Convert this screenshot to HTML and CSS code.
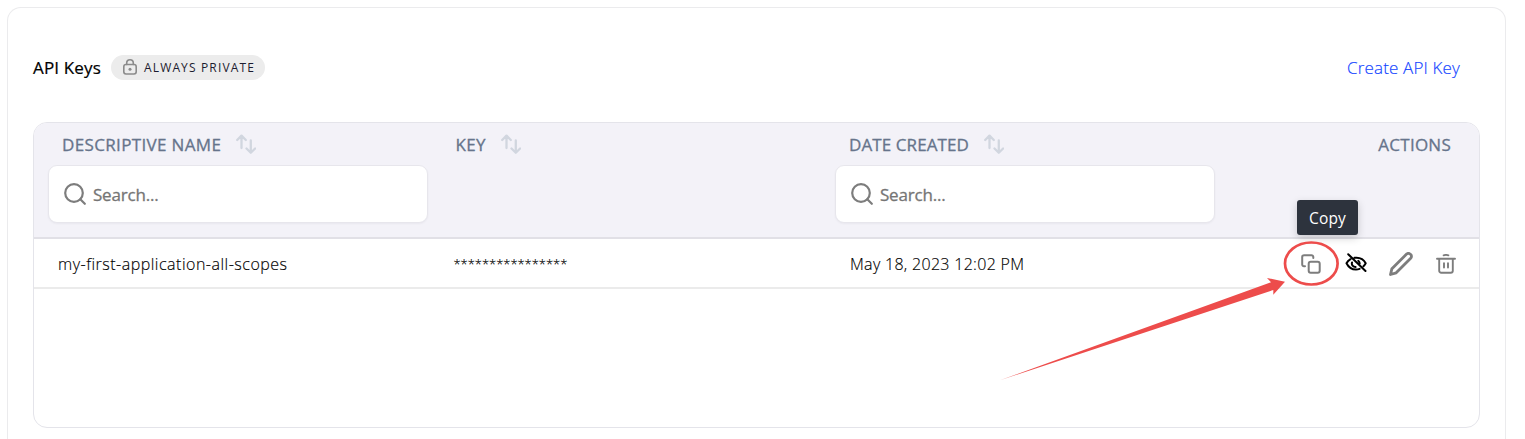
FILE: index.html
```html
<!DOCTYPE html>
<html lang="en">
<head>
<meta charset="utf-8">
<title>API Keys</title>
<link rel="stylesheet" href="styles.css">
</head>
<body>
<svg class="defs" aria-hidden="true">
  <symbol id="sort" viewBox="0 0 20 20"><path d="M5.5 14V2M1.2 6L5.5 1.6 9.8 6M14.8 6.5v12M10.5 14.5l4.3 4.2 4.3-4.2"/></symbol>
  <symbol id="search" viewBox="0 0 22 22"><circle cx="10" cy="10" r="8.8"/><path d="M16.3 16.3l4.5 4.5"/></symbol>
</svg>
<main class="card">
  <header class="card-header">
    <h1 class="title">API Keys</h1>
    <span class="badge">
      <svg class="lock" viewBox="0 0 14 16"><path d="M3.7 5.500V4.100a3.300 3.300 0 0 1 6.600 0V5.500"/><rect x=".8" y="5.500" width="12.400" height="9.500" rx="2.200"/><circle class="dot" cx="7" cy="10.200" r="1.500"/></svg>
      <span class="badge-text">ALWAYS PRIVATE</span>
    </span>
    <a class="create">Create API Key</a>
  </header>
  <section class="table">
    <div class="head">
      <div class="col">
        <div class="label"><span class="l-name">DESCRIPTIVE NAME</span><svg class="sort"><use href="#sort"/></svg></div>
        <div class="search"><svg class="glass"><use href="#search"/></svg><span>Search...</span></div>
      </div>
      <div class="col">
        <div class="label"><span class="l-key">KEY</span><svg class="sort"><use href="#sort"/></svg></div>
      </div>
      <div class="col">
        <div class="label"><span class="l-date">DATE CREATED</span><svg class="sort"><use href="#sort"/></svg></div>
        <div class="search"><svg class="glass"><use href="#search"/></svg><span>Search...</span></div>
      </div>
      <div class="col last"><div class="label"><span class="l-actions">ACTIONS</span></div></div>
    </div>
    <div class="row">
      <div class="cell name">my-first-application-all-scopes</div>
      <div class="cell key">****************</div>
      <div class="cell date">May 18, 2023 12:02 PM</div>
      <div class="actions">
        <svg class="copy" viewBox="0 0 20 20"><path d="M4 12.3H3A1.8 1.8 0 0 1 1.2 10.5V3A1.8 1.8 0 0 1 3 1.2h7.5A1.8 1.8 0 0 1 12.3 3v1"/><rect x="7.7" y="7.7" width="11" height="11" rx="2"/></svg>
        <svg class="eye" viewBox="0 0 22 20"><path d="M5.500 6.200C3.800 7.200 2.400 8.500 1.500 10.200c1.900 3.800 5.300 6.300 9.500 6.300 1.300 0 2.500-.2 3.600-.6M9.500 4.800c5-.6 9.300 1.700 11.200 5.400-.6 1.200-1.300 2.200-2.200 3M7 9.400c-.7 2.600 1 4.700 3.600 4.700M13.300 7.800c.8.600 1.300 1.400 1.400 2.600M3.200 1.200l17.300 16.800"/></svg>
        <svg class="pencil" viewBox="0 0 24 24"><path d="M1.500 22.500l1.400-5.800L17.600 2.100a2.500 2.500 0 0 1 3.600 0l.5.500a2.500 2.500 0 0 1 0 3.600L7.200 20.800z"/></svg>
        <svg class="trash" viewBox="0 0 20 20"><path d="M1 4.700h18M3.200 4.900v11.800a2 2 0 0 0 2 2h9.600a2 2 0 0 0 2-2V4.900M7.600 1.300q2.400-.8 4.800 0M8 9.300v4.200M12 9.300v4.200"/></svg>
      </div>
    </div>
  </section>
</main>
<div class="tooltip">Copy</div>
<svg class="annotation" viewBox="0 0 1525 439">
  <ellipse cx="1311.300" cy="263.500" rx="26.300" ry="21"/>
  <path d="M1000 380.300L1271 282.300 1267 278 1285 281.700 1273.300 294.700 1273.300 290Z"/>
</svg>
</body>
</html>
```

FILE: styles.css
```css
* { box-sizing: border-box; }
body {
  margin: 0;
  height: 439px;
  overflow: hidden;
  background: #fff;
  font-family: "Open Sans", "Noto Sans", sans-serif;
  font-size: 16px;
  color: #000;
}
svg { display: block; flex: none; fill: none; stroke: currentColor; stroke-linecap: round; stroke-linejoin: round; }
.defs { position: absolute; width: 0; height: 0; }
.card {
  margin: 7px 19px 0 7px;
  height: 432px;
  padding: 0 25px;
  border: 1px solid #ebebed;
  border-bottom: 0;
  border-radius: 14px 14px 0 0;
}
.card-header { display: flex; align-items: center; height: 114px; padding: 4px 20px 0 0; }
.title { margin: 0; width: 78px; font-size: 17px; font-weight: 500; letter-spacing: 0.15px; white-space: nowrap; -webkit-text-stroke: 0.2px; }
.badge {
  display: flex; align-items: center; gap: 7px;
  width: 154px; height: 25px; padding-left: 12px;
  border-radius: 13px; background: #ececec;
}
.lock { width: 14px; height: 16px; color: #8a8a8a; stroke-width: 1.6; }
.lock .dot { fill: currentColor; stroke: none; }
.badge-text { font-size: 12px; letter-spacing: 1.15px; color: #1c1c30; white-space: nowrap; }
.create { margin-left: auto; font-size: 17px; font-weight: 300; color: #1043ff; letter-spacing: 0.15px; white-space: nowrap; -webkit-text-stroke: 0.15px; }
.table { height: 306px; border: 1px solid #e4e4ea; border-radius: 14px; overflow: hidden; }
.head, .row { display: grid; grid-template-columns: 393.500px 393.500px 393.500px 1fr; padding-left: 14px; }
.head { height: 116px; background: #f3f2f8; border-bottom: 2px solid #e1e0e6; }
.row { height: 50px; border-bottom: 2px solid #ebebeb; align-items: center; }
.label {
  display: flex; align-items: center; gap: 15px;
  height: 42px; padding-left: 14px;
  color: #66748b; font-size: 17px; font-weight: 500; white-space: nowrap;
  -webkit-text-stroke: 0.3px;
}
.l-name { letter-spacing: 0.35px; }
.l-key { letter-spacing: 0.3px; }
.l-date { letter-spacing: 0.1px; }
.l-actions { letter-spacing: 0.25px; }
.last .label { justify-content: flex-end; padding-right: 28px; }
.sort { width: 20px; height: 20px; color: #d1d6df; stroke-width: 2.300; }
.search {
  display: flex; align-items: center; gap: 7px;
  width: 380px; height: 58px; padding-left: 15px;
  background: #fff; border: 1px solid #e7e6ec; border-radius: 9px;
  box-shadow: 0 1px 2px rgba(30, 30, 60, .05);
  color: #757575; font-size: 17px; font-weight: 500; letter-spacing: -0.200px;
  -webkit-text-stroke: 0.3px;
}
.glass { width: 22px; height: 22px; color: #7d7d7d; stroke-width: 2.200; }
.cell { padding-top: 2px; font-size: 16px; font-weight: 300; white-space: nowrap; color: #000; -webkit-text-stroke: 0.15px; }
.name { padding-left: 10px; letter-spacing: 0.5px; }
.key { padding-left: 12px; font-size: 13px; letter-spacing: -0.05px; }
.date { padding-left: 15px; letter-spacing: 0.3px; }
.actions { display: flex; align-items: center; justify-content: flex-end; padding: 1px 23px 0 0; color: #7d7d7d; }
.copy { width: 20px; height: 20px; margin-right: 24px; stroke-width: 2; }
.eye { width: 22px; height: 20px; margin: 0 22px 2px 0; color: #000; stroke-width: 2; }
.pencil { width: 24px; height: 24px; margin-right: 23px; stroke-width: 2.800; }
.trash { width: 20px; height: 20px; stroke-width: 1.900; }
.tooltip {
  position: absolute; left: 1297px; top: 200px; width: 61px; height: 35px;
  border-radius: 3px; background: #2d333d; color: #fff;
  font-size: 15.500px; line-height: 36px; text-align: center; letter-spacing: .2px;
  box-shadow: 0 3px 9px rgba(0, 0, 0, .18);
}
.annotation { position: absolute; left: 0; top: 0; width: 1525px; height: 439px; color: #ed4c4b; pointer-events: none; }
.annotation ellipse { stroke-width: 2.700; }
.annotation path { fill: currentColor; stroke: none; }
```
